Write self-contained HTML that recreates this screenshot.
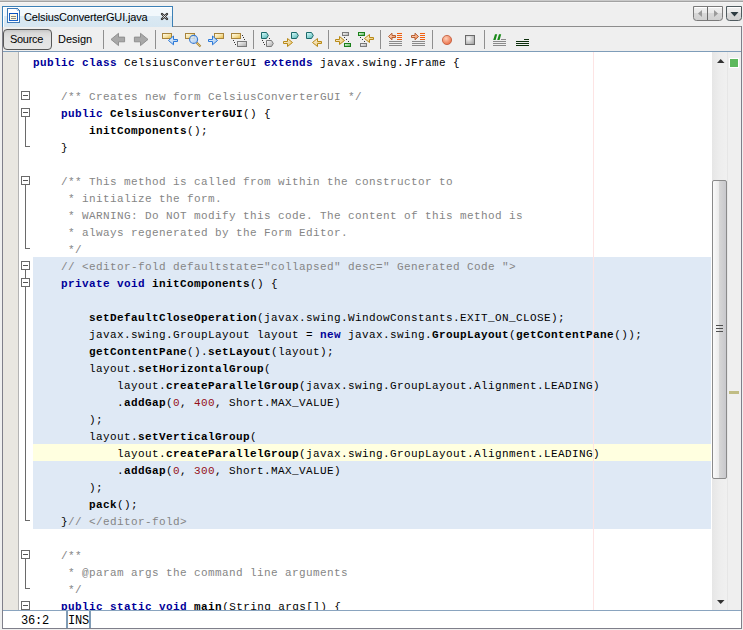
<!DOCTYPE html>
<html><head><meta charset="utf-8">
<style>
*{margin:0;padding:0;box-sizing:border-box}
html,body{width:743px;height:630px;overflow:hidden;background:#efefef;position:relative}
.a{position:absolute}
#topband{left:0;top:0;width:743px;height:3px;background:linear-gradient(#cacaca 0,#cacaca 1px,#a2a2a2 1px,#a2a2a2 2px,#f5f5f5 2px)}
#tab{left:2px;top:6px;width:171px;height:21px;border:1px solid #3c80b6;border-bottom:none;background:linear-gradient(#f2f8fc 0,#f2f8fc 9px,#dae9f3 9px,#d6e6f1 100%)}
#tab .in{position:absolute;left:0;top:0;right:0;bottom:0;border-left:1px solid #fff;border-top:1px solid #fff}
#tabtext{left:24px;top:11px;font:11px "Liberation Sans",sans-serif;letter-spacing:-0.15px;color:#000;white-space:nowrap}
#tabline{left:173px;top:26px;width:569px;height:1px;background:#8d8d8d}
#lborder{left:2px;top:27px;width:1px;height:602px;background:#7f7f8a}
#rborder{left:741px;top:26px;width:1px;height:603px;background:#7f7f8a}
#toolbar{left:3px;top:27px;width:738px;height:24px;background:#efefef}
#tbline{left:3px;top:51px;width:738px;height:1px;background:#7f9db9}
#srcbtn{left:3px;top:29px;width:49px;height:21px;border:1px solid #585858;border-radius:4px;background:linear-gradient(#c4c4c4 0,#d8d8d8 3px,#e2e2e2 8px,#e6e6e6 100%)}
.btxt{font:11px "Liberation Sans",sans-serif;color:#000;white-space:nowrap}
.sep{width:1px;height:19px;top:30px;background:#8f8f8f}
#editor{left:3px;top:52px;width:738px;height:558px;background:#fff;overflow:hidden}
#gutter{left:0;top:0;width:16px;height:558px;background:#e9e7e1;border-right:1px solid #b4b4b4}
#margin{left:590px;top:0;width:1px;height:558px;background:#fde4e4}
.hl{left:30px;width:678px;height:17px;background:#dfe9f5}
.cur{background:#ffffe0}
.ln{position:absolute;left:30px;height:17px;line-height:17px;font:11px "Liberation Mono",monospace;letter-spacing:0.4px;white-space:pre;color:#000}
.k{color:#000099;font-weight:bold}
.m{font-weight:bold}
.c{color:#858585}
.n{color:#941018}
#vsb{left:709px;top:0;width:15px;height:558px;background:linear-gradient(90deg,#e6e6e6,#ededed 50%,#f0f0f0)}
#thumb{left:709px;top:128px;width:15px;height:299px;border:1px solid #8a8a8a;border-radius:2px;background:linear-gradient(90deg,#fafafa,#ececec 45%,#d6d6d6 50%,#c8c8cc)}
#stripe{left:724px;top:0;width:14px;height:558px;background:#efefef;border-left:1px solid #e6e6e6}
#status{left:3px;top:610px;width:738px;height:19px;background:#fff;border-top:1px solid #8aa4bf;border-bottom:1px solid #7f7f8a}

.st{font-size:12px;letter-spacing:-0.2px}

</style></head><body>
<div class="a" id="topband"></div>
<div class="a" id="toolbar"></div>
<div class="a" id="tab"><div class="in"></div></div>
<div class="a" id="tabtext">CelsiusConverterGUI.java</div>
<div class="a" id="tabline"></div>
<div class="a" id="tbline"></div>
<div class="a" id="lborder"></div>
<div class="a" id="rborder"></div>
<div class="a" id="srcbtn"></div>
<div class="a btxt" style="left:10px;top:33px;letter-spacing:-0.3px">Source</div>
<div class="a btxt" style="left:58px;top:33px">Design</div>
<div class="a sep" style="left:103px"></div>
<div class="a sep" style="left:155px"></div>
<div class="a sep" style="left:253px"></div>
<div class="a sep" style="left:328px"></div>
<div class="a sep" style="left:380px"></div>
<div class="a sep" style="left:432px"></div>
<div class="a sep" style="left:484px"></div>
<div class="a" id="editor">
<div class="a" id="gutter"></div>
<div class="a hl" style="top:205px;height:272px"></div>
<div class="a hl cur" style="top:392px"></div>
<div class="a" id="margin"></div>
<div class="a" id="vsb"></div>
<div class="a" id="thumb"></div>
<div class="a" id="stripe"></div>
<div class="ln" style="top:5px"><span class="k">public</span> <span class="k">class</span> CelsiusConverterGUI <span class="k">extends</span> javax.swing.JFrame {</div>
<div class="ln" style="top:39px">    <span class="c">/** Creates new form CelsiusConverterGUI */</span></div>
<div class="ln" style="top:56px">    <span class="k">public</span> <span class="m">CelsiusConverterGUI</span>() {</div>
<div class="ln" style="top:73px">        <span class="m">initComponents</span>();</div>
<div class="ln" style="top:90px">    }</div>
<div class="ln" style="top:124px">    <span class="c">/** This method is called from within the constructor to</span></div>
<div class="ln" style="top:141px">     <span class="c">* initialize the form.</span></div>
<div class="ln" style="top:158px">     <span class="c">* WARNING: Do NOT modify this code. The content of this method is</span></div>
<div class="ln" style="top:175px">     <span class="c">* always regenerated by the Form Editor.</span></div>
<div class="ln" style="top:192px">     <span class="c">*/</span></div>
<div class="ln" style="top:209px">    <span class="c">// &lt;editor-fold defaultstate="collapsed" desc=" Generated Code "&gt;</span></div>
<div class="ln" style="top:226px">    <span class="k">private</span> <span class="k">void</span> <span class="m">initComponents</span>() {</div>
<div class="ln" style="top:260px">        <span class="m">setDefaultCloseOperation</span>(javax.swing.WindowConstants.EXIT_ON_CLOSE);</div>
<div class="ln" style="top:277px">        javax.swing.GroupLayout layout = <span class="k">new</span> javax.swing.<span class="m">GroupLayout</span>(<span class="m">getContentPane</span>());</div>
<div class="ln" style="top:294px">        <span class="m">getContentPane</span>().<span class="m">setLayout</span>(layout);</div>
<div class="ln" style="top:311px">        layout.<span class="m">setHorizontalGroup</span>(</div>
<div class="ln" style="top:328px">            layout.<span class="m">createParallelGroup</span>(javax.swing.GroupLayout.Alignment.LEADING)</div>
<div class="ln" style="top:345px">            .<span class="m">addGap</span>(<span class="n">0</span>, <span class="n">400</span>, Short.MAX_VALUE)</div>
<div class="ln" style="top:362px">        );</div>
<div class="ln" style="top:379px">        layout.<span class="m">setVerticalGroup</span>(</div>
<div class="ln" style="top:396px">            layout.<span class="m">createParallelGroup</span>(javax.swing.GroupLayout.Alignment.LEADING)</div>
<div class="ln" style="top:413px">            .<span class="m">addGap</span>(<span class="n">0</span>, <span class="n">300</span>, Short.MAX_VALUE)</div>
<div class="ln" style="top:430px">        );</div>
<div class="ln" style="top:447px">        <span class="m">pack</span>();</div>
<div class="ln" style="top:464px">    }<span class="c">// &lt;/editor-fold&gt;</span></div>
<div class="ln" style="top:498px">    <span class="c">/**</span></div>
<div class="ln" style="top:515px">     <span class="c">* @param args the command line arguments</span></div>
<div class="ln" style="top:532px">     <span class="c">*/</span></div>
<div class="ln" style="top:549px">    <span class="k">public</span> <span class="k">static</span> <span class="k">void</span> <span class="m">main</span>(String args[]) {</div>
</div>
<div class="a" id="status"></div>
<div class="a" style="left:66px;top:611px;width:2px;height:17px;background:#809cb6"></div>
<div class="a" style="left:89px;top:611px;width:2px;height:17px;background:#809cb6"></div>
<div class="a ln st" style="left:21px;top:614px">36:2</div>
<div class="a ln st" style="left:68px;top:614px">INS</div>
<svg class="a" style="left:0;top:0" width="743" height="630" viewBox="0 0 743 630">
<g shape-rendering="crispEdges">
<rect x="21.5" y="91.5" width="8" height="8" fill="#fff" stroke="#6a6a6a"/>
<path d="M23 95.5h5" stroke="#555"/>
<rect x="21.5" y="108.5" width="8" height="8" fill="#fff" stroke="#6a6a6a"/>
<path d="M23 112.5h5" stroke="#555"/>
<path d="M25.5 117 V146.5 H30" stroke="#6a6a6a" fill="none"/>
<rect x="21.5" y="176.5" width="8" height="8" fill="#fff" stroke="#6a6a6a"/>
<path d="M23 180.5h5" stroke="#555"/>
<path d="M25.5 185 V248.5 H30" stroke="#6a6a6a" fill="none"/>
<rect x="21.5" y="261.5" width="8" height="8" fill="#fff" stroke="#6a6a6a"/>
<path d="M23 265.5h5" stroke="#555"/>
<path d="M25.5 270 V278" stroke="#6a6a6a"/>
<rect x="21.5" y="278.5" width="8" height="8" fill="#fff" stroke="#6a6a6a"/>
<path d="M23 282.5h5" stroke="#555"/>
<path d="M25.5 287 V520.5 H30" stroke="#6a6a6a" fill="none"/>
<rect x="21.5" y="550.5" width="8" height="8" fill="#fff" stroke="#6a6a6a"/>
<path d="M23 554.5h5" stroke="#555"/>
<path d="M25.5 559 V588.5 H30" stroke="#6a6a6a" fill="none"/>
<rect x="21.5" y="601.5" width="8" height="8" fill="#fff" stroke="#6a6a6a"/>
<path d="M23 605.5h5" stroke="#555"/>
</g>
<defs>
<linearGradient id="gy" x1="0" y1="0" x2="1" y2="1"><stop offset="0" stop-color="#fffdf0"/><stop offset="0.5" stop-color="#f6e3a8"/><stop offset="1" stop-color="#e8b838"/></linearGradient>
<linearGradient id="gb" x1="0" y1="0" x2="1" y2="1"><stop offset="0" stop-color="#f4f9ff"/><stop offset="1" stop-color="#9cc2ec"/></linearGradient>
<linearGradient id="gg" x1="0" y1="0" x2="1" y2="1"><stop offset="0" stop-color="#ffffff"/><stop offset="1" stop-color="#a8a8a8"/></linearGradient>
<linearGradient id="gt" x1="0" y1="0" x2="0.6" y2="1"><stop offset="0" stop-color="#dcffff"/><stop offset="1" stop-color="#68c0c0"/></linearGradient>
<linearGradient id="gn" x1="0" y1="0" x2="1" y2="1"><stop offset="0" stop-color="#f0fff0"/><stop offset="1" stop-color="#48a848"/></linearGradient>
<linearGradient id="ga" x1="0" y1="0" x2="1" y2="1"><stop offset="0" stop-color="#fffaf0"/><stop offset="1" stop-color="#e8c060"/></linearGradient>
<linearGradient id="go" x1="0" y1="0" x2="1" y2="1"><stop offset="0" stop-color="#fff0e8"/><stop offset="1" stop-color="#f08040"/></linearGradient>
<radialGradient id="gr" cx="0.4" cy="0.35" r="0.7"><stop offset="0" stop-color="#ffd0b8"/><stop offset="1" stop-color="#e86840"/></radialGradient>
<radialGradient id="gs" cx="0.35" cy="0.35" r="0.8"><stop offset="0" stop-color="#f8f8f8"/><stop offset="1" stop-color="#a0a0a0"/></radialGradient>
<linearGradient id="nav" x1="0" y1="0" x2="0" y2="1"><stop offset="0" stop-color="#f0f0f0"/><stop offset="0.45" stop-color="#e8e8e8"/><stop offset="0.5" stop-color="#d8d8d8"/><stop offset="1" stop-color="#d0d0d0"/></linearGradient>
</defs>
<!-- tab icon -->
<path d="M7.5 8.5H17.5L19.5 10.5V22.5H7.5Z" fill="#fff" stroke="#3d79b8" shape-rendering="crispEdges"/>
<path d="M17 9.5l1.5 1.5" stroke="#3d79b8"/>
<rect x="9.5" y="13.5" width="8" height="7" fill="#fff8e0" stroke="#1a62c8" shape-rendering="crispEdges"/>
<path d="M9 13.5h9" stroke="#0a50c0" shape-rendering="crispEdges"/>
<path d="M11 16.5h5M11 18.5h5" stroke="#8a8a80" shape-rendering="crispEdges"/>
<!-- close x -->
<path d="M162 14l5 5M167 14l-5 5" stroke="#333" stroke-width="2.4" stroke-linecap="round"/>
<path d="M162.6 14.6l3.8 3.8M166.4 14.6l-3.8 3.8" stroke="#f8f8f8" stroke-width="0.8"/>
<!-- nav buttons -->
<path d="M693.5 6.5H722.5V17.5Q722.5 20.5 719.5 20.5H696.5Q693.5 20.5 693.5 17.5Z" fill="url(#nav)" stroke="#7a7a7a"/>
<path d="M694.5 7.5H721.5" stroke="#fff" shape-rendering="crispEdges"/>
<path d="M707.5 7V20" stroke="#6a6a6a" shape-rendering="crispEdges"/>
<path d="M702 10V17L698 13.5Z" fill="#9a9a9a"/>
<path d="M714 10V17L718 13.5Z" fill="#9a9a9a"/>
<path d="M726.5 6.5H741.5V17.5Q741.5 20.5 738.5 20.5H729.5Q726.5 20.5 726.5 17.5Z" fill="url(#nav)" stroke="#4f5a5e"/>
<path d="M727.5 7.5H740.5" stroke="#fff" shape-rendering="crispEdges"/>
<path d="M730.5 12H738.5L734.5 16.5Z" fill="#2e3c42"/>
<!-- back / forward -->
<path d="M111 39.4L118.5 33.3V37.1H124.6V41.8H118.5V45.6Z" fill="#a8a8a8" stroke="#8a8a8a" stroke-width="0.9"/>
<path d="M148 39.4L140.5 33.3V37.1H134.4V41.8H140.5V45.6Z" fill="#a8a8a8" stroke="#8a8a8a" stroke-width="0.9"/>
<!-- find prev -->
<rect x="162.5" y="33.5" width="9" height="5" fill="url(#gy)" stroke="#a8843c" shape-rendering="crispEdges"/>
<path d="M168.5 40.5L173.5 36V39.5H177.5V41.5H173.5V44.8Z" fill="url(#gb)" stroke="#2a78d8"/>
<!-- find -->
<rect x="185.5" y="33.5" width="9" height="5" fill="url(#gy)" stroke="#a8843c" shape-rendering="crispEdges"/>
<path d="M196.5 42.5L200.5 46.5" stroke="#a8843c" stroke-width="2.2"/>
<path d="M196.8 42.8L200.2 46.2" stroke="#f0d070" stroke-width="0.8"/>
<circle cx="193.6" cy="39.4" r="4" fill="url(#gb)" stroke="#3a7ad0" stroke-width="1.1" fill-opacity="0.85"/>
<!-- find next -->
<rect x="214.5" y="33.5" width="9" height="5" fill="url(#gy)" stroke="#a8843c" shape-rendering="crispEdges"/>
<path d="M217.5 40.5L212.5 36V39.5H208.5V41.5H212.5V44.8Z" fill="url(#gb)" stroke="#2a78d8"/>
<!-- toggle highlight -->
<rect x="231.5" y="33.5" width="9" height="5" fill="url(#gy)" stroke="#a8843c" shape-rendering="crispEdges"/>
<rect x="237.5" y="41.5" width="9" height="5" fill="url(#gg)" stroke="#7a7a7a" shape-rendering="crispEdges"/>
<g fill="#333" shape-rendering="crispEdges"><rect x="242" y="35" width="1" height="1"/><rect x="243" y="37" width="1" height="1"/><rect x="244" y="39" width="1" height="1"/><rect x="233" y="40" width="1" height="1"/><rect x="234" y="42" width="1" height="1"/><rect x="235" y="44" width="1" height="1"/></g>
<!-- bookmarks -->
<path d="M261.5 32.5H266.5L268.3 35.5L266.5 38.5H261.5Z" fill="url(#gt)" stroke="#1c6a6a"/>
<path d="M266.5 40.5H271.5L273.3 43.5L271.5 46.5H266.5Z" fill="url(#gg)" stroke="#7a7a7a"/>
<g fill="#333" shape-rendering="crispEdges"><rect x="269" y="38" width="1" height="1"/><rect x="262" y="40" width="1" height="1"/><rect x="263" y="42" width="1" height="1"/><rect x="264" y="44" width="1" height="1"/></g>
<path d="M291.5 32.5H296.5L298.3 35.5L296.5 38.5H291.5Z" fill="url(#gt)" stroke="#1c6a6a"/>
<path d="M283.5 41.5H287.5V38.5L292.5 42.5L287.5 46.5V43.5H283.5Z" fill="url(#ga)" stroke="#b88a18"/>
<path d="M306.5 32.5H311.5L313.3 35.5L311.5 38.5H306.5Z" fill="url(#gt)" stroke="#1c6a6a"/>
<path d="M321.5 41.5H317.5V38.5L312.5 42.5L317.5 46.5V43.5H321.5Z" fill="url(#ga)" stroke="#b88a18"/>
<!-- error nav -->
<rect x="342.5" y="32.5" width="6" height="3" fill="url(#gg)" stroke="#7a7a7a" shape-rendering="crispEdges"/>
<rect x="344.5" y="43.5" width="6" height="3" fill="url(#gn)" stroke="#1a801a" shape-rendering="crispEdges"/>
<path d="M335.5 39.5H339.5V36.5L344.5 40.5L339.5 44.5V41.5H335.5Z" fill="url(#ga)" stroke="#b88a18"/>
<g fill="#333" shape-rendering="crispEdges"><rect x="344" y="37" width="1" height="1"/><rect x="346" y="39" width="1" height="1"/><rect x="348" y="41" width="1" height="1"/></g>
<rect x="358.5" y="32.5" width="6" height="3" fill="url(#gn)" stroke="#1a801a" shape-rendering="crispEdges"/>
<rect x="360.5" y="43.5" width="6" height="3" fill="url(#gg)" stroke="#7a7a7a" shape-rendering="crispEdges"/>
<path d="M373.5 37.5H369.5V34.5L364.5 38.5L369.5 42.5V39.5H373.5Z" fill="url(#ga)" stroke="#b88a18"/>
<g fill="#333" shape-rendering="crispEdges"><rect x="360" y="37" width="1" height="1"/><rect x="362" y="39" width="1" height="1"/><rect x="364" y="41" width="1" height="1"/></g>
<!-- shift left / right -->
<path d="M388.5 36.5L392 33.2V35.5H395.5V37.5H392V39.8Z" fill="url(#go)" stroke="#b05020" stroke-width="0.9"/>
<g shape-rendering="crispEdges"><path d="M397 33.5h5M397 35.5h5M397 37.5h5M397 39.5h5" stroke="#f06010"/><path d="M389 41.5h13M389 43.5h13M389 45.5h13" stroke="#8a8a8a"/></g>
<path d="M418.5 36.5L415 33.2V35.5H411.5V37.5H415V39.8Z" fill="url(#go)" stroke="#b05020" stroke-width="0.9"/>
<g shape-rendering="crispEdges"><path d="M420 33.5h5M420 35.5h5M420 37.5h5M420 39.5h5" stroke="#f06010"/><path d="M412 41.5h13M412 43.5h13M412 45.5h13" stroke="#8a8a8a"/></g>
<!-- macro -->
<circle cx="447" cy="40" r="4.6" fill="url(#gr)" stroke="#c05a3a" stroke-width="0.8"/>
<rect x="465.5" y="35.5" width="9" height="9" fill="url(#gs)" stroke="#6a6a6a" shape-rendering="crispEdges"/>
<!-- comment -->
<path d="M495 34.2h2.2L495.6 40h-2.4ZM499 34.2h2.2L499.6 40h-2.4Z" fill="#1a8a1a"/>
<g shape-rendering="crispEdges"><path d="M501 39.5h5M493 41.5h13M493 43.5h13M493 45.5h13" stroke="#8a8a8a"/></g>
<g shape-rendering="crispEdges"><path d="M524 39.5h5M516 41.5h13M516 43.5h13M516 45.5h13" stroke="#0c2e0c" stroke-width="1.3"/></g>
<!-- scrollbar arrows -->
<path d="M717 63H724.5L720.7 59Z" fill="#333"/>
<path d="M717 600H724.5L720.7 604Z" fill="#333"/>
<rect x="729.5" y="58.5" width="9" height="9" fill="#5cb85c" stroke="#ffffff" shape-rendering="crispEdges"/>
<g shape-rendering="crispEdges" stroke="#505050"><path d="M716 325.5h7M716 328.5h7M716 331.5h7"/></g>

<rect x="729" y="391" width="10" height="3" fill="#c0bc84"/>
</svg>
</body></html>
